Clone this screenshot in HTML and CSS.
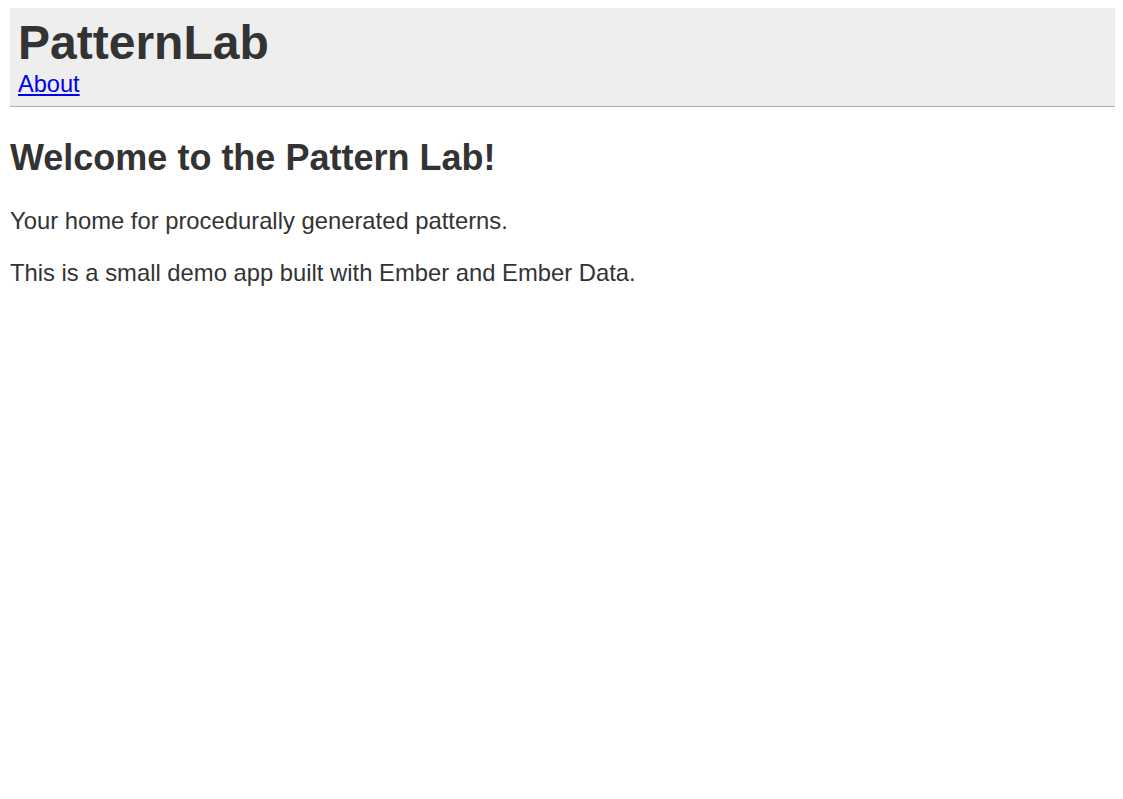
FILE: index.html
```html
<!DOCTYPE html>
<html>
<head>
<meta charset="utf-8">
<link rel="stylesheet" href="styles.css">
</head>
<body>
<header class="site-header">
  <div class="brand">PatternLab</div>
  <nav class="nav"><a href="#">About</a></nav>
</header>
<main class="content">
  <h2 class="welcome">Welcome to the Pattern Lab!</h2>
  <p class="lead">Your home for procedurally generated patterns.</p>
  <p class="lead">This is a small demo app built with Ember and Ember Data.</p>
</main>
</body>
</html>
```
FILE: styles.css
```css
body {
  margin: 8px 8px 8px 10px;
  font-family: "Liberation Sans", Arial, Helvetica, sans-serif;
  color: #333;
  background: #fff;
}
.site-header {
  background: #eee;
  border-bottom: 1px solid #aaaabb;
  padding: 6px 8px 10px 8px;
}
.brand {
  font-size: 48px;
  font-weight: bold;
  line-height: 58px;
}
.nav {
  font-size: 23.6px;
  line-height: 24px;
}
.nav a {
  color: #0000ee;
}
.content {
  padding: 0;
}
.welcome {
  font-size: 36px;
  font-weight: bold;
  line-height: normal;
  margin: 30px 0 28px;
}
.lead {
  font-size: 23.8px;
  line-height: normal;
  margin: 0 0 24px;
}
```
